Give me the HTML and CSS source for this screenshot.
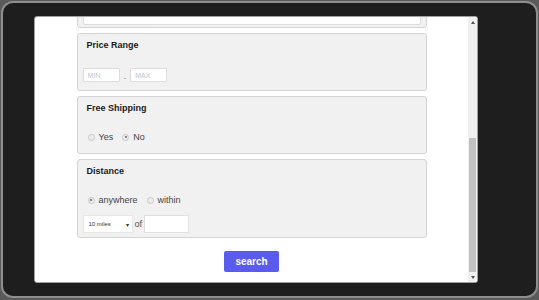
FILE: index.html
```html
<!DOCTYPE html>
<html lang="en">
<head>
    <meta charset="UTF-8">
    <meta name="viewport" content="width=device-width, initial-scale=1.0">
    <title>Search Filters</title>
    <link rel="stylesheet" href="styles.css">
</head>
<body>

<!-- Device frame -->
<div class="device">
    <div class="screen">
        <div class="content">

            <!-- Keyword box, scrolled mostly out of view -->
            <div class="card card-top">
                <div class="text-box"></div>
            </div>

            <div class="card">
                <div class="card-title">Price Range</div>
                <div class="row">
                    <input class="small-input" type="text" placeholder="MIN">
                    <span class="dash">-</span>
                    <input class="small-input" type="text" placeholder="MAX">
                </div>
            </div>

            <div class="card card-shipping">
                <div class="card-title">Free Shipping</div>
                <div class="row radios">
                    <span class="radio"></span><span class="radio-label">Yes</span>
                    <span class="radio checked"></span><span class="radio-label">No</span>
                </div>
            </div>

            <div class="card card-distance">
                <div class="card-title">Distance</div>
                <div class="row radios">
                    <span class="radio checked"></span><span class="radio-label">anywhere</span>
                    <span class="radio"></span><span class="radio-label">within</span>
                </div>
                <div class="row select-row">
                    <div class="select">10 miles <span class="caret">&#9662;</span></div>
                    <span class="of">of</span>
                    <input class="zip-input" type="text">
                </div>
            </div>

            <button class="search-btn">search</button>
        </div>

        <!-- Scrollbar -->
        <div class="scrollbar">
            <div class="arrow arrow-up"></div>
            <div class="track"><div class="thumb"></div></div>
            <div class="arrow arrow-down"></div>
        </div>
    </div>
</div>

</body>
</html>
```

FILE: styles.css
```css
body {
    margin: 0;
    background-color: #5a5a5a;
    font-family: "Liberation Sans", Arial, sans-serif;
}
.device {
    margin: 1px 1px 0 1px;
    height: 297px;
    box-sizing: border-box;
    border: 2px solid #8e8e8e;
    border-radius: 12px;
    background-color: #1e1e1e;
    padding: 13px 58px 13px 31px;
    display: flex;
}
.screen {
    flex: 1;
    display: flex;
    background-color: #fff;
    border: 1px solid #a0a0a0;
    border-radius: 3px;
    overflow: hidden;
}
.content {
    flex: 1;
    display: flex;
    flex-direction: column;
    align-items: center;
    overflow: hidden;
}
.card {
    width: 350px;
    box-sizing: border-box;
    background-color: #f1f1f1;
    border: 1px solid #d4d4d4;
    border-radius: 3px;
    padding: 6px 5px 8px;
    margin-top: 5px;
    flex-shrink: 0;
}
.card-top {
    margin-top: -15px;
    padding: 0 5px 2px;
}
.text-box {
    height: 20px;
    background-color: #fff;
    border: 1px solid #dcdcdc;
    border-radius: 2px;
}
.card-title {
    font-size: 9px;
    line-height: 11px;
    font-weight: bold;
    color: #1a1a1a;
    margin: 0 0 17px 4px;
}
.row {
    display: flex;
    align-items: center;
}
.small-input {
    width: 37px;
    height: 14px;
    box-sizing: border-box;
    border: 1px solid #dedede;
    border-radius: 1px;
    padding: 0 4px;
    font-family: inherit;
    font-size: 7px;
    background-color: #fff;
}
.small-input::placeholder {
    color: #c4c4c4;
}
.dash {
    font-size: 8px;
    color: #888;
    margin: 4px 4px 0;
}
.radios {
    height: 12px;
    margin-left: 5px;
    margin-bottom: 1px;
}
.card-shipping {
    padding-bottom: 9px;
}
.radio {
    width: 7px;
    height: 7px;
    box-sizing: border-box;
    border-radius: 50%;
    border: 1px solid #c8c8c8;
    background-color: #ececec;
    position: relative;
}
.radio.checked::after {
    content: "";
    position: absolute;
    left: 1.5px;
    top: 1.5px;
    width: 2px;
    height: 2px;
    border-radius: 50%;
    background-color: #666;
}
.radio-label {
    font-size: 9px;
    color: #444;
    margin: 0 9px 0 4px;
}
.card-distance {
    padding-bottom: 4px;
}
.select-row {
    margin-top: 9px;
}
.select {
    width: 50px;
    height: 18px;
    box-sizing: border-box;
    background-color: #fff;
    border: 1px solid #e6e6e6;
    font-size: 6px;
    color: #333;
    display: flex;
    align-items: center;
    justify-content: space-between;
    padding: 0 3px 0 5px;
}
.caret {
    font-size: 6px;
    color: #333;
}
.of {
    font-size: 9px;
    color: #555;
    margin: 0 2px 0 2px;
}
.zip-input {
    width: 45px;
    height: 18px;
    box-sizing: border-box;
    border: 1px solid #e0e0e0;
    background-color: #fff;
}
.search-btn {
    margin-top: 13px;
    width: 55px;
    height: 21px;
    flex-shrink: 0;
    background-color: #5b5bef;
    color: #fff;
    border: none;
    border-radius: 2px;
    font-family: inherit;
    font-size: 10px;
    font-weight: bold;
    padding: 0;
}
.scrollbar {
    width: 9px;
    display: flex;
    flex-direction: column;
    background-color: #f1f1f1;
}
.arrow {
    height: 10px;
    display: flex;
    align-items: center;
    justify-content: center;
}
.arrow-up::before {
    content: "";
    border-left: 2px solid transparent;
    border-right: 2px solid transparent;
    border-bottom: 3px solid #505050;
}
.arrow-down::before {
    content: "";
    border-left: 2px solid transparent;
    border-right: 2px solid transparent;
    border-top: 3px solid #505050;
}
.track {
    flex: 1;
    display: flex;
    flex-direction: column;
    justify-content: flex-end;
}
.thumb {
    height: 134px;
    margin: 0 1px;
    background-color: #c1c1c1;
}
```
